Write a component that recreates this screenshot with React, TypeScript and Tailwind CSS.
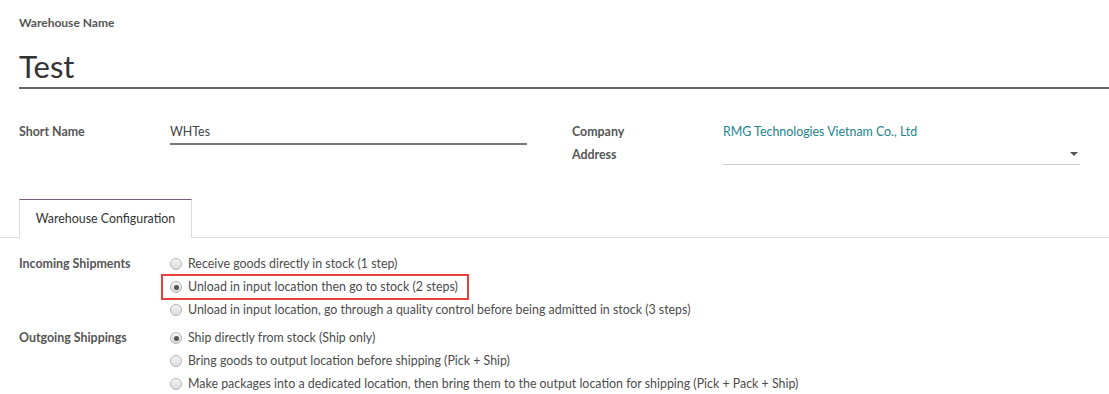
import React from "react";

const incoming = [
  { label: "Receive goods directly in stock (1 step)", checked: false, boxed: false },
  { label: "Unload in input location then go to stock (2 steps)", checked: true, boxed: true },
  { label: "Unload in input location, go through a quality control before being admitted in stock (3 steps)", checked: false, boxed: false },
];

const outgoing = [
  { label: "Ship directly from stock (Ship only)", checked: true },
  { label: "Bring goods to output location before shipping (Pick + Ship)", checked: false },
  { label: "Make packages into a dedicated location, then bring them to the output location for shipping (Pick + Pack + Ship)", checked: false },
];

function Radio({ checked }: { checked: boolean }) {
  return (
    <span className="w-[12px] h-[12px] rounded-full border border-[#b5b5b5] bg-gradient-to-b from-[#f4f4f4] to-[#dcdcdc] flex items-center justify-center flex-shrink-0">
      {checked && <span className="w-[5px] h-[5px] rounded-full bg-[#555]" />}
    </span>
  );
}

export default function App() {
  return (
    <div className="w-[1109px] h-[394px] bg-white overflow-hidden text-[#4c4c4c] text-[12.4px]" style={{ fontFamily: "Lato, 'Open Sans', sans-serif" }}>
      {/* Title */}
      <div className="pl-[19px] pt-[14px]">
        <p className="text-[12px] font-bold text-[#555]">Warehouse Name</p>
        <div className="mt-[16px] border-b-2 border-[#666] pb-[3px]">
          <p className="text-[31px] leading-[36px] text-[#333]">Test</p>
        </div>
      </div>

      {/* Fields */}
      <div className="flex pl-[19px] pt-[34px] h-[116px]">
        <div className="w-[553px] flex">
          <span className="w-[151px] font-bold text-[#555]">Short Name</span>
          <div className="w-[357px] h-[22px] border-b-2 border-[#777] text-[#444]">WHTes</div>
        </div>
        <div className="flex-1 flex">
          <div className="w-[151px] font-bold text-[#555] flex flex-col gap-[4px]">
            <span>Company</span>
            <span>Address</span>
          </div>
          <div className="w-[357px] flex flex-col">
            <span className="text-[#21858f]">RMG Technologies Vietnam Co., Ltd</span>
            <div className="mt-[3px] h-[20px] border-b border-[#ccc] flex items-center justify-end pr-[2px]">
              <span className="w-0 h-0 border-l-[4px] border-r-[4px] border-t-[4px] border-l-transparent border-r-transparent border-t-[#555]" />
            </div>
          </div>
        </div>
      </div>

      {/* Tabs */}
      <div className="h-[38px] border-b border-[#ddd] flex items-end pl-[19px] mt-[-5px]">
        <div className="h-[39px] w-[173px] border-t border-l border-r border-t-[#7c5b7d] border-x-[#ddd] bg-white mb-[-1px] flex items-center justify-center text-[#333]">
          Warehouse Configuration
        </div>
      </div>

      {/* Config */}
      <div className="pl-[19px] pt-[17px]">
        <div className="flex">
          <span className="w-[151px] font-bold text-[#555]">Incoming Shipments</span>
          <div className="flex flex-col gap-[5px]">
            {incoming.map((o) => (
              <div
                key={o.label}
                className={
                  o.boxed
                    ? "flex items-center gap-[6px] h-[18px] ml-[-5px] pl-[5px] outline-2 outline-[#e8413d] outline-offset-2 w-[300px]"
                    : "flex items-center gap-[6px] h-[18px]"
                }
              >
                <Radio checked={o.checked} />
                <span>{o.label}</span>
              </div>
            ))}
          </div>
        </div>
        <div className="flex mt-[10px]">
          <span className="w-[151px] font-bold text-[#555]">Outgoing Shippings</span>
          <div className="flex flex-col gap-[5px]">
            {outgoing.map((o) => (
              <div key={o.label} className="flex items-center gap-[6px] h-[18px]">
                <Radio checked={o.checked} />
                <span>{o.label}</span>
              </div>
            ))}
          </div>
        </div>
      </div>
    </div>
  );
}
